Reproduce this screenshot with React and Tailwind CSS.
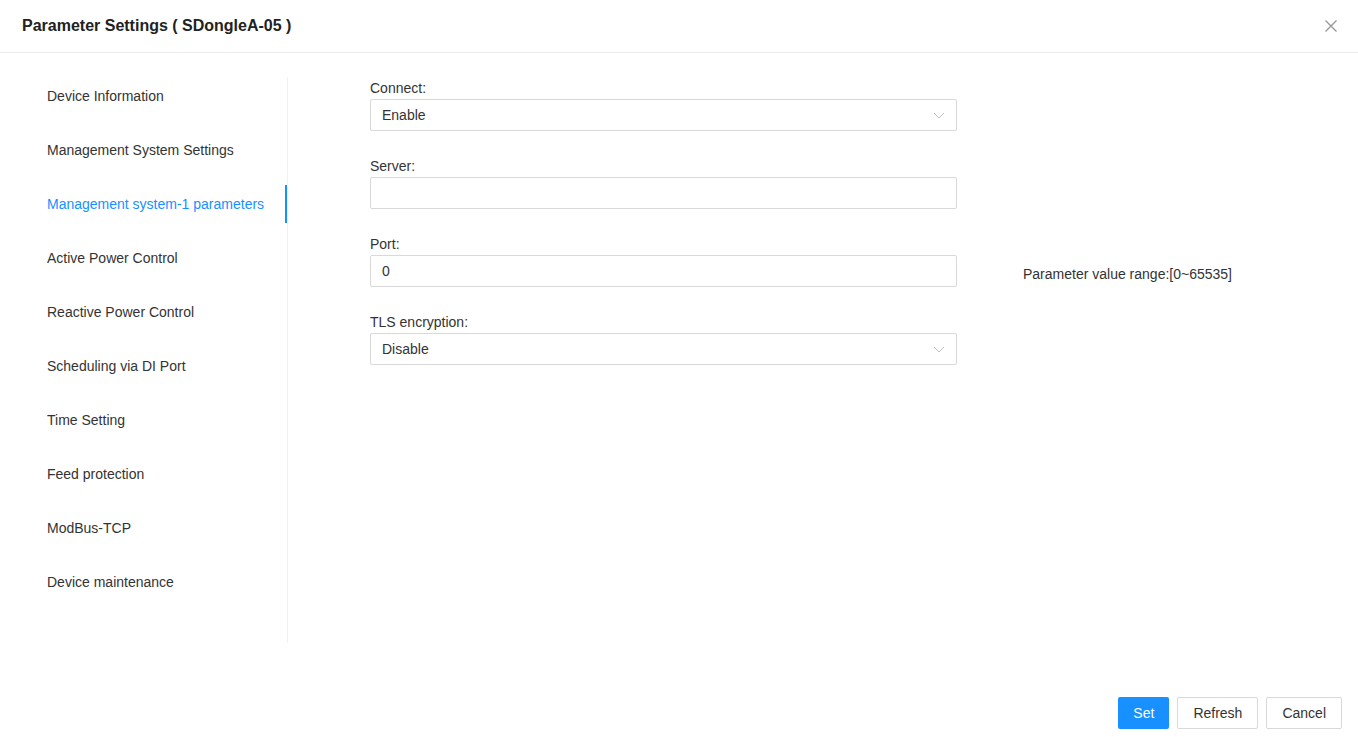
import React from 'react';

const menuItems = [
  'Device Information',
  'Management System Settings',
  'Management system-1 parameters',
  'Active Power Control',
  'Reactive Power Control',
  'Scheduling via DI Port',
  'Time Setting',
  'Feed protection',
  'ModBus-TCP',
  'Device maintenance',
];

const Chevron = () => (
  <svg width="12" height="12" viewBox="0 0 12 12" className="text-[#bfbfbf]">
    <path d="M1 4 L6 9 L11 4" fill="none" stroke="currentColor" strokeWidth="1" />
  </svg>
);

const Field = ({ label, value, select, hint }) => (
  <div className="flex items-end">
    <div className="w-[587px]">
      <div className="h-[22px] leading-[22px] text-[14px] text-[#333]">{label}</div>
      <div className="h-8 border border-[#d9d9d9] rounded-[2px] flex items-center justify-between pl-[11px] pr-[11px] text-[14px] text-[#333]">
        <span>{value}</span>
        {select && <Chevron />}
      </div>
    </div>
    {hint && (
      <div className="h-8 flex items-center pt-[6px] ml-[66px] text-[14px] text-[#333]">{hint}</div>
    )}
  </div>
);

export default function App() {
  const active = 2;
  return (
    <div className="h-screen w-full bg-white flex flex-col font-['Liberation_Sans',Arial,sans-serif]">
      {/* Header */}
      <div className="h-[53px] shrink-0 border-b border-[#ebebeb] flex items-center justify-between pl-[22px] pr-[20px]">
        <div className="text-[16px] font-bold text-[#222]">Parameter Settings ( SDongleA-05 )</div>
        <svg width="14" height="14" viewBox="0 0 14 14" className="text-[#999]">
          <path d="M1.5 1.5 L12.5 12.5 M12.5 1.5 L1.5 12.5" stroke="currentColor" strokeWidth="1.4" />
        </svg>
      </div>

      {/* Body */}
      <div className="flex-1 flex pt-[24px]">
        <div className="w-[288px] h-[566px] border-r border-[#f0f0f0] flex flex-col gap-4">
          {menuItems.map((item, i) => (
            <div
              key={item}
              className={`relative h-[38px] flex items-center pl-[47px] text-[14px] ${
                i === active ? 'text-[#1890ff]' : 'text-[#333]'
              }`}
            >
              {item}
              {i === active && (
                <span className="absolute right-0 top-0 h-full w-[2px] bg-[#1890ff]" />
              )}
            </div>
          ))}
        </div>

        <div className="flex-1 pl-[82px] flex flex-col gap-6">
          <Field label="Connect:" value="Enable" select />
          <Field label="Server:" value="" />
          <Field label="Port:" value="0" hint="Parameter value range:[0~65535]" />
          <Field label="TLS encryption:" value="Disable" select />
        </div>
      </div>

      {/* Footer */}
      <div className="shrink-0 flex justify-end gap-2 pr-[16px] pb-[8px]">
        <button className="h-8 px-[15px] rounded-[2px] bg-[#1890ff] text-white text-[14px]">Set</button>
        <button className="h-8 px-[15px] rounded-[2px] border border-[#d9d9d9] text-[#333] text-[14px]">Refresh</button>
        <button className="h-8 px-[15px] rounded-[2px] border border-[#d9d9d9] text-[#333] text-[14px]">Cancel</button>
      </div>
    </div>
  );
}
